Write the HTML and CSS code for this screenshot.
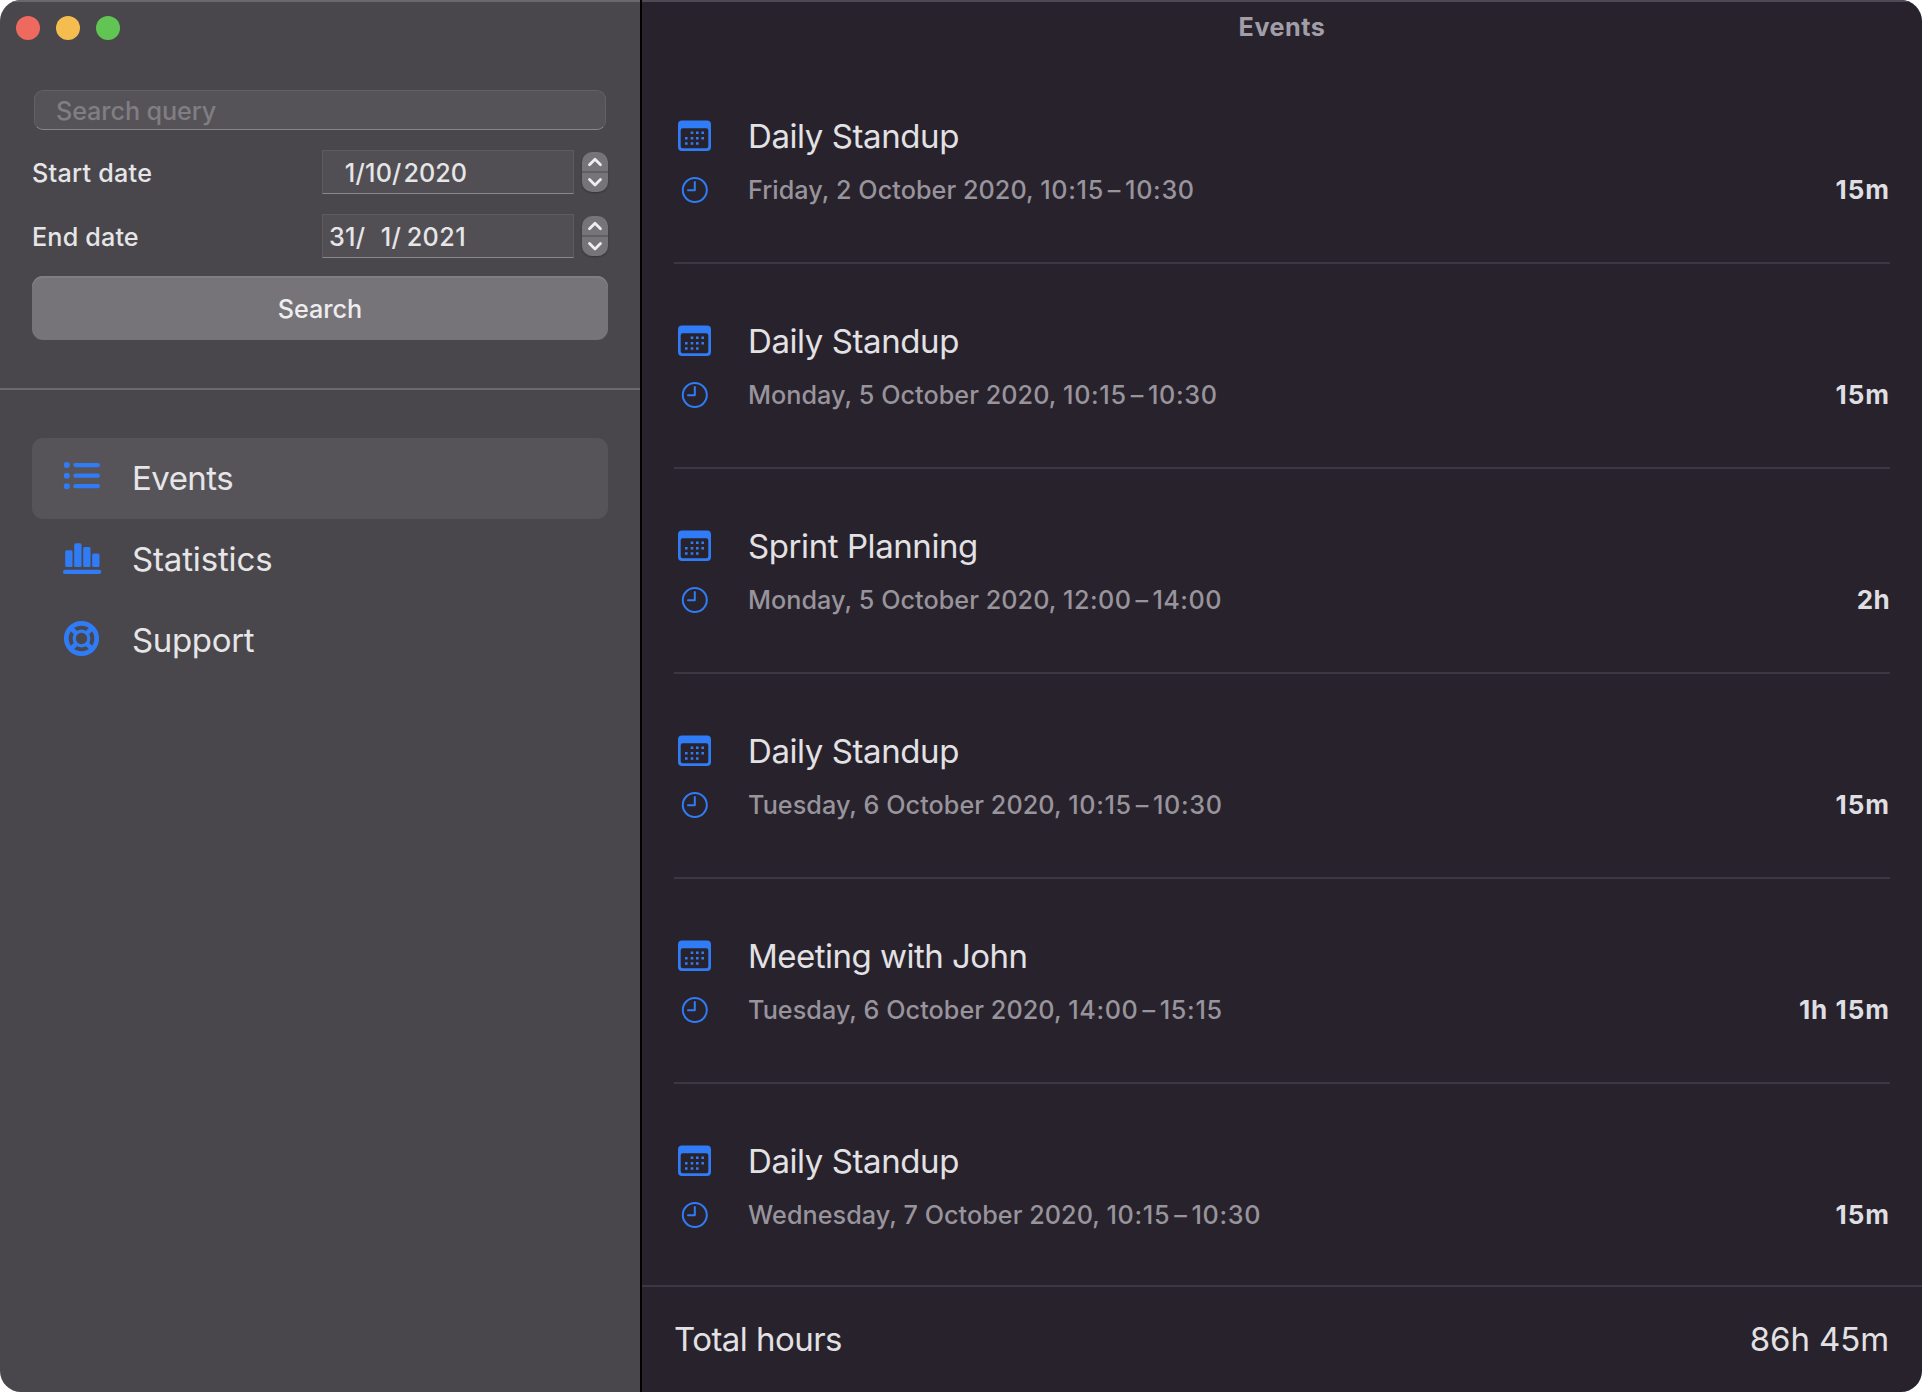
FILE: index.html
```
<!DOCTYPE html>
<html lang="en">
<head>
<meta charset="utf-8">
<title>Events</title>
<link rel="stylesheet" href="styles.css">
</head>
<body>
<svg class="defs" width="0" height="0" aria-hidden="true">
  <symbol id="calendar" viewBox="0 0 42 40">
    <path fill="currentColor" fill-rule="evenodd" d="M8 4.400h25a4 4 0 0 1 4 4v22.600a4 4 0 0 1-4 4H8a4 4 0 0 1-4-4V8.400a4 4 0 0 1 4-4zM8.700 12.300a2 2 0 0 0-2 2V30.200a2 2 0 0 0 2 2H32.300a2 2 0 0 0 2-2V14.300a2 2 0 0 0-2-2z"/>
    <path stroke="currentColor" stroke-width="2.600" d="M16.700 16.700h2.600m2.700 0h2.600m2.800 0h2.600M11 22.200h2.600m3.100 0h2.600m2.700 0h2.600m2.800 0h2.600M11 27.500h2.600m3.100 0h2.600m2.700 0h2.600"/>
  </symbol>
  <symbol id="clock" viewBox="0 0 42 34">
    <g fill="none" stroke="currentColor" stroke-width="2" stroke-linecap="round" stroke-linejoin="round">
      <circle cx="20.800" cy="17" r="12"/>
      <path d="M20.800 9v8.300H14"/>
    </g>
  </symbol>
  <symbol id="chevrons" viewBox="0 0 26 40">
    <path fill="none" stroke="#eeedef" stroke-width="2.800" stroke-linecap="round" stroke-linejoin="round" d="M7.500 12.700L13 7.200l5.500 5.500M7.500 27.600L13 33.100l5.500-5.500"/>
    <path stroke="#605e63" stroke-width="2" d="M0 20h26"/>
  </symbol>
</svg>

<div class="window">
  <aside class="sidebar">
    <div class="lights"><i class="light close"></i><i class="light minimise"></i><i class="light zoom"></i></div>
    <form class="filters">
      <div class="query">Search query</div>
      <div class="date-row">
        <span class="label start">Start date</span>
        <div class="date"><span class="day">1/</span><span class="month">10/</span><span class="year">2020</span></div>
        <svg class="stepper"><use href="#chevrons"/></svg>
      </div>
      <div class="date-row">
        <span class="label">End date</span>
        <div class="date"><span class="day">31/</span><span class="month">1/</span><span class="year alt">2021</span></div>
        <svg class="stepper"><use href="#chevrons"/></svg>
      </div>
      <button type="button" class="search">Search</button>
    </form>
    <nav class="nav">
      <a class="item active">
        <svg class="nav-icon" viewBox="0 0 40 41" fill="currentColor"><circle cx="4.800" cy="7.100" r="3"/><circle cx="4.800" cy="17.700" r="3"/><circle cx="4.800" cy="28.200" r="3"/><rect x="11.300" y="5" width="26.700" height="4.200" rx="2.100"/><rect x="11.300" y="15.600" width="26.700" height="4.200" rx="2.100"/><rect x="11.300" y="26.100" width="26.700" height="4.200" rx="2.100"/></svg>
        <span class="n-events">Events</span>
      </a>
      <a class="item">
        <svg class="nav-icon" viewBox="0 0 40 41" fill="currentColor"><rect x="3.200" y="11.200" width="7.300" height="16.800" rx="1.500"/><rect x="12.200" y="4.200" width="7.300" height="23.800" rx="1.500"/><rect x="21.200" y="8" width="7.300" height="20" rx="1.500"/><rect x="30.200" y="14.400" width="7.300" height="13.600" rx="1.500"/><rect x="1" y="30.700" width="38.300" height="4.300" rx="2.100"/></svg>
        <span class="n-stats">Statistics</span>
      </a>
      <a class="item">
        <svg class="nav-icon" viewBox="0 0 40 41" fill="none" stroke="currentColor"><circle cx="19.500" cy="18.500" r="15.200" stroke-width="4.700"/><circle cx="19.500" cy="18.500" r="7.300" stroke-width="3.200"/><path stroke-width="4.600" d="M9.300 8.300l5 5M29.700 8.300l-5 5M9.300 28.700l5-5M29.700 28.700l-5-5"/></svg>
        <span class="n-support">Support</span>
      </a>
    </nav>
  </aside>

  <main class="main">
    <header class="titlebar">Events</header>
    <section class="events">
      <article class="event">
        <svg class="cal"><use href="#calendar"/></svg><h2>Daily Standup</h2>
        <svg class="clock"><use href="#clock"/></svg><p>Friday, 2 October 2020, <span class="time">10:15<b class="dash">–</b>10:30</span></p><strong>15m</strong>
      </article>
      <article class="event">
        <svg class="cal"><use href="#calendar"/></svg><h2>Daily Standup</h2>
        <svg class="clock"><use href="#clock"/></svg><p>Monday, 5 October 2020, <span class="time">10:15<b class="dash">–</b>10:30</span></p><strong>15m</strong>
      </article>
      <article class="event">
        <svg class="cal"><use href="#calendar"/></svg><h2>Sprint Planning</h2>
        <svg class="clock"><use href="#clock"/></svg><p>Monday, 5 October 2020, <span class="time wide">12:00<b class="dash">–</b>14:00</span></p><strong class="tight">2h</strong>
      </article>
      <article class="event">
        <svg class="cal"><use href="#calendar"/></svg><h2>Daily Standup</h2>
        <svg class="clock"><use href="#clock"/></svg><p>Tuesday, 6 October 2020, <span class="time">10:15<b class="dash">–</b>10:30</span></p><strong>15m</strong>
      </article>
      <article class="event">
        <svg class="cal"><use href="#calendar"/></svg><h2 class="long">Meeting with John</h2>
        <svg class="clock"><use href="#clock"/></svg><p>Tuesday, 6 October 2020, <span class="time">14:00<b class="dash">–</b>15:15</span></p><strong>1h 15m</strong>
      </article>
      <article class="event">
        <svg class="cal"><use href="#calendar"/></svg><h2>Daily Standup</h2>
        <svg class="clock"><use href="#clock"/></svg><p>Wednesday, 7 October 2020, <span class="time">10:15<b class="dash">–</b>10:30</span></p><strong>15m</strong>
      </article>
    </section>
    <footer class="total"><span class="total-label">Total hours</span><span class="total-value">86h 45m</span></footer>
  </main>
</div>
</body>
</html>
```
FILE: styles.css
```
* { box-sizing: border-box; }

body {
  margin: 0;
  background: #fff;
  font: 450 25.2px/34px Inter, "Liberation Sans", sans-serif;
  color: #e6e5e7;
}

.defs { display: block; height: 0; }

.window {
  display: flex;
  width: 1922px;
  height: 1392px;
  border-radius: 21px;
  overflow: hidden;
}

/* Sidebar */
.sidebar {
  width: 642px;
  background: #49474b;
  border-right: 2px solid #000;
  box-shadow: inset 0 2px #6a686d;
}

.lights { display: flex; gap: 16px; padding: 16px 16px 0; height: 90px; }
.light { width: 24px; height: 24px; border-radius: 50%; }
.close { background: #ee6a5f; }
.minimise { background: #f5bd4f; }
.zoom { background: #61c554; }

.filters {
  height: 300px;
  padding: 0 32px;
  border-bottom: 2px solid #6b696e;
}

.query {
  height: 40px;
  margin: 0 2px 20px;
  padding: 3px 0 0 21px;
  border: 1px solid #636166;
  border-bottom-color: #87858a;
  border-radius: 9px;
  background: #555358;
  color: #807e83;
  letter-spacing: -.1px;
}

.date-row { display: flex; align-items: center; height: 44px; margin-bottom: 20px; }
.label { flex: 1; padding-top: 2px; letter-spacing: .15px; }
.label.start { letter-spacing: .25px; }

.date {
  display: flex;
  width: 252px;
  height: 44px;
  padding: 5px 0 0 6px;
  border: 1px solid #5d5b60;
  border-bottom-color: #89878b;
  background: #514f54;
  letter-spacing: .2px;
}
.day { width: 36px; text-align: right; }
.month { width: 36px; text-align: right; }
.year { width: 66px; text-align: right; letter-spacing: 0; }
.year.alt { width: 65px; letter-spacing: .4px; }

.stepper {
  width: 26px;
  height: 40px;
  margin-left: 8px;
  border-radius: 10px;
  background: #767479;
  box-shadow: 0 1px 2px rgba(0, 0, 0, .3);
}

.search {
  display: block;
  width: 576px;
  height: 64px;
  margin-top: -2px;
  padding: 2px 0 0;
  border: 0;
  border-radius: 11px;
  background: #767479;
  box-shadow: inset 0 2px #807e83;
  color: #eeedef;
  font: inherit;
  letter-spacing: 0;
}

.nav { padding: 48px 32px 0; font-size: 33px; font-weight: 400; }
.item { display: flex; align-items: center; height: 81px; padding-left: 30px; border-radius: 11px; }
.item span { padding-bottom: 2px; }
.item.active { background: #565459; }
.nav-icon { width: 40px; height: 41px; margin-right: 30px; color: #307cf6; }
.n-events { letter-spacing: -.55px; }
.n-stats { letter-spacing: -.15px; }
.n-support { letter-spacing: -.35px; }

/* Event list */
.main {
  flex: 1;
  display: flex;
  flex-direction: column;
  background: #28222d;
  box-shadow: inset 0 2px #4e4954;
}

.titlebar {
  height: 59px;
  padding-top: 10px;
  text-align: center;
  font-weight: 700;
  letter-spacing: .5px;
  color: #a29ea7;
}

.events { height: 1226px; padding: 0 32px; overflow: hidden; }

.event {
  display: grid;
  grid-template-columns: 42px 1fr auto;
  grid-template-rows: 40px 34px;
  column-gap: 32px;
  row-gap: 17px;
  height: 205px;
  padding-top: 57px;
  border-bottom: 2px solid #3d3743;
}
.event:last-child { border-bottom: 0; }

.cal { width: 42px; height: 40px; color: #307cf6; }
.clock { width: 42px; height: 34px; color: #307cf6; }

h2 {
  grid-column: 2 / 4;
  margin: 0;
  font-size: 33px;
  font-weight: 400;
  line-height: 40px;
  letter-spacing: -.42px;
  color: #e2e1e3;
}
h2.long { letter-spacing: -.52px; }

.event p { margin: 0; color: #98949b; letter-spacing: .05px; }
.time { letter-spacing: .65px; }
.time.wide { letter-spacing: .45px; }
.dash { padding: 0 4px; font-weight: 450; }

strong { font-size: 26px; font-weight: 700; letter-spacing: 1px; color: #dfdee0; }
strong.tight { letter-spacing: .3px; }

.total {
  display: flex;
  justify-content: space-between;
  align-items: center;
  flex: 1;
  padding: 0 33px 2px 32px;
  border-top: 2px solid #3d3743;
  font-size: 33px;
  font-weight: 400;
  color: #e2e1e3;
}
.total-label { letter-spacing: -.55px; }
.total-value { letter-spacing: -.1px; }
```
